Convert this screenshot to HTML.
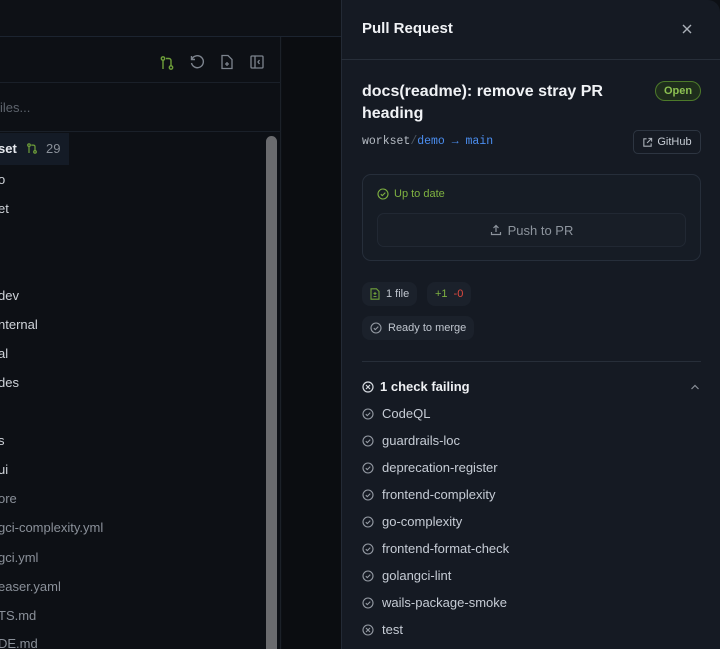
<!DOCTYPE html>
<html><head><style>
*{margin:0;padding:0;box-sizing:border-box}
html,body{width:720px;height:649px;overflow:hidden}
body{background:#0d1015;font-family:"Liberation Sans",sans-serif;position:relative;color:#d8dce2}
.abs{position:absolute}
.top{left:0;top:0;width:341px;height:37px;background:#0e1116;border-bottom:1px solid #1c2430}
.side{left:0;top:37px;width:281px;height:612px;background:#0d1015;border-right:1px solid #1c2129}
.dark{left:282px;top:37px;width:59px;height:612px;background:#0b0d11}
.hline{left:0;width:281px;height:1px;background:#1a2029}
.it{position:absolute;left:-2px;font-size:13px;color:#d0d4da;white-space:nowrap}
.it.g{color:#8a9099}
.panel{left:341px;top:0;width:379px;height:649px;background:#151a23;border-left:1px solid #232a35;border-top-right-radius:12px}
svg{display:block}
.chk{position:absolute;left:362px;font-size:13px;color:#c6ccd5;display:flex;align-items:center;gap:8px}
.pill{position:absolute;background:#1b212b;border-radius:8px;font-size:11px;color:#c0c6cf;display:flex;align-items:center;gap:6px;padding:0 8px;height:24px}
</style></head><body>
<div class="abs top"></div>
<div class="abs side">
</div>
<div class="abs hline" style="top:82px"></div>
<div class="abs hline" style="top:131px"></div>
<div class="abs dark"></div>
<svg class="abs" style="left:159px;top:55px" width="16" height="16" viewBox="0 0 16 16" fill="none" stroke="#6fa03a" stroke-width="1.4"><circle cx="4" cy="3.5" r="1.7"/><circle cx="12" cy="12.5" r="1.7"/><path d="M4 5.2V14M7 3.5h3a2 2 0 0 1 2 2v5.3"/></svg>
<svg class="abs" style="left:189px;top:54px" width="16" height="16" viewBox="0 0 16 16" fill="none" stroke="#7d848e" stroke-width="1.4"><path d="M3 5a6 6 0 1 1-.5 4"/><path d="M2.5 2v3.5H6"/></svg>
<svg class="abs" style="left:220px;top:54px" width="14" height="16" viewBox="0 0 14 16" fill="none" stroke="#7d848e" stroke-width="1.3"><path d="M2 1.5h6l4 4V14.5H2z"/><path d="M7 8v4M5 10h4"/></svg>
<svg class="abs" style="left:250px;top:55px" width="14" height="14" viewBox="0 0 14 14" fill="none" stroke="#7d848e" stroke-width="1.3"><rect x="1" y="1" width="12" height="12" rx="1"/><path d="M5 1v12M9.5 5L8 7l1.5 2"/></svg>
<div class="abs" style="left:0;top:100px;font-size:13px;color:#5d636c">iles...</div>
<div class="abs" style="left:0;top:133px;width:69px;height:32px;background:#141b26"></div>
<div class="it" style="top:141px;font-weight:bold;color:#e6e9ee">set</div>
<svg class="abs" style="left:26px;top:142px" width="12" height="13" viewBox="0 0 16 16" fill="none" stroke="#6fa03a" stroke-width="1.6"><circle cx="4" cy="3.5" r="1.7"/><circle cx="12" cy="12.5" r="1.7"/><path d="M4 5.2V14M7 3.5h3a2 2 0 0 1 2 2v5.3"/></svg>
<div class="abs" style="left:46px;top:141px;font-size:13px;color:#8a9099">29</div>
<div class="it" style="top:172px">o</div>
<div class="it" style="top:201px">et</div>
<div class="it" style="top:288px">dev</div>
<div class="it" style="top:317px">nternal</div>
<div class="it" style="top:346px">al</div>
<div class="it" style="top:375px">des</div>
<div class="it" style="top:433px">s</div>
<div class="it" style="top:462px">ui</div>
<div class="it g" style="top:491px">ore</div>
<div class="it g" style="top:520px">gci-complexity.yml</div>
<div class="it g" style="top:550px">gci.yml</div>
<div class="it g" style="top:579px">easer.yaml</div>
<div class="it g" style="top:608px">TS.md</div>
<div class="it g" style="top:636px">DE.md</div>
<div class="abs" style="left:266px;top:136px;width:11px;height:520px;background:#6a6b6e;border-radius:6px"></div>

<div class="abs panel"></div>
<div class="abs" style="left:341px;top:59px;width:379px;height:1px;background:#272e39"></div>
<div class="abs" style="left:362px;top:20px;font-size:15px;font-weight:bold;color:#f0f2f5">Pull Request</div>
<svg class="abs" style="left:681px;top:23px" width="12" height="12" viewBox="0 0 12 12" stroke="#aab0b8" stroke-width="1.4"><path d="M2 2l8 8M10 2l-8 8"/></svg>
<div class="abs" style="left:362px;top:81px;width:260px;font-size:16px;font-weight:bold;color:#f0f2f5;line-height:22px">docs(readme): remove stray PR heading</div>
<div class="abs" style="left:655px;top:81px;width:46px;height:20px;border:1px solid #4d7a2a;background:#1e2d1c;border-radius:10px;color:#8cc152;font-size:11px;font-weight:bold;text-align:center;line-height:18px">Open</div>
<div class="abs" style="left:362px;top:135px;font-family:'Liberation Mono',monospace;font-size:11.5px;color:#b6bcc4">workset<span style="color:#4c5560">/</span><span style="color:#4b8ef0">demo → main</span></div>
<div class="abs" style="left:633px;top:130px;width:68px;height:24px;border:1px solid #2d3541;border-radius:5px;font-size:11px;color:#c6ccd4;display:flex;align-items:center;justify-content:center;gap:4px"><svg width="11" height="11" viewBox="0 0 12 12" fill="none" stroke="#aab0b8" stroke-width="1.2"><path d="M5 2H2v8h8V7M7 1.5h3.5V5M10.5 1.5L5.5 6.5"/></svg>GitHub</div>
<div class="abs" style="left:362px;top:174px;width:339px;height:87px;border:1px solid #262e3a;border-radius:9px;background:#161c25"></div>
<div class="abs" style="left:377px;top:188px;font-size:11px;color:#7fb241;display:flex;align-items:center;gap:5px"><svg width="12" height="12" viewBox="0 0 12 12" fill="none" stroke="#7fb241" stroke-width="1.1"><circle cx="6" cy="6" r="5"/><path d="M3.8 6.2l1.5 1.4 3-3"/></svg>Up to date</div>
<div class="abs" style="left:377px;top:213px;width:309px;height:34px;border:1px solid #212833;border-radius:7px;background:#181e27;font-size:13px;color:#8d949d;display:flex;align-items:center;justify-content:center;gap:6px"><svg width="12" height="12" viewBox="0 0 12 12" fill="none" stroke="#8d949d" stroke-width="1.2"><path d="M1.5 8v2.5h9V8M6 8V1.5M3.5 4L6 1.5 8.5 4"/></svg>Push to PR</div>
<div class="pill" style="left:362px;top:282px"><svg width="10" height="12" viewBox="0 0 10 12" fill="none" stroke="#6fa03a" stroke-width="1.1"><path d="M1 .8h5.5L9 3.3V11.2H1z"/><path d="M5 4v3M3.5 5.5h3M3.5 8.5h3"/></svg>1 file</div>
<div class="pill" style="left:427px;top:282px"><span style="color:#7fb241">+1</span><span style="color:#e0493f">-0</span></div>
<div class="pill" style="left:362px;top:316px"><svg width="12" height="12" viewBox="0 0 12 12" fill="none" stroke="#959ba4" stroke-width="1.1"><circle cx="6" cy="6" r="5"/><path d="M3.8 6.2l1.5 1.4 3-3"/></svg>Ready to merge</div>
<div class="abs" style="left:362px;top:361px;width:339px;height:1px;background:#272e39"></div>
<div class="chk" style="top:379px;font-weight:bold;color:#eef0f3;gap:6px"><svg width="12" height="12" viewBox="0 0 12 12" fill="none" stroke="#d6dae0" stroke-width="1.2"><circle cx="6" cy="6" r="5"/><path d="M4 4l4 4M8 4l-4 4"/></svg>1 check failing</div>
<svg class="abs" style="left:690px;top:384px" width="10" height="6" viewBox="0 0 10 6" fill="none" stroke="#8a9099" stroke-width="1.2"><path d="M1.5 5L5 1.5 8.5 5"/></svg>
<div class="chk" style="top:406px"><svg width="12" height="12" viewBox="0 0 12 12" fill="none" stroke="#959ba4" stroke-width="1.1"><circle cx="6" cy="6" r="5"/><path d="M3.8 6.2l1.5 1.4 3-3"/></svg>CodeQL</div>
<div class="chk" style="top:433px"><svg width="12" height="12" viewBox="0 0 12 12" fill="none" stroke="#959ba4" stroke-width="1.1"><circle cx="6" cy="6" r="5"/><path d="M3.8 6.2l1.5 1.4 3-3"/></svg>guardrails-loc</div>
<div class="chk" style="top:460px"><svg width="12" height="12" viewBox="0 0 12 12" fill="none" stroke="#959ba4" stroke-width="1.1"><circle cx="6" cy="6" r="5"/><path d="M3.8 6.2l1.5 1.4 3-3"/></svg>deprecation-register</div>
<div class="chk" style="top:487px"><svg width="12" height="12" viewBox="0 0 12 12" fill="none" stroke="#959ba4" stroke-width="1.1"><circle cx="6" cy="6" r="5"/><path d="M3.8 6.2l1.5 1.4 3-3"/></svg>frontend-complexity</div>
<div class="chk" style="top:514px"><svg width="12" height="12" viewBox="0 0 12 12" fill="none" stroke="#959ba4" stroke-width="1.1"><circle cx="6" cy="6" r="5"/><path d="M3.8 6.2l1.5 1.4 3-3"/></svg>go-complexity</div>
<div class="chk" style="top:541px"><svg width="12" height="12" viewBox="0 0 12 12" fill="none" stroke="#959ba4" stroke-width="1.1"><circle cx="6" cy="6" r="5"/><path d="M3.8 6.2l1.5 1.4 3-3"/></svg>frontend-format-check</div>
<div class="chk" style="top:568px"><svg width="12" height="12" viewBox="0 0 12 12" fill="none" stroke="#959ba4" stroke-width="1.1"><circle cx="6" cy="6" r="5"/><path d="M3.8 6.2l1.5 1.4 3-3"/></svg>golangci-lint</div>
<div class="chk" style="top:595px"><svg width="12" height="12" viewBox="0 0 12 12" fill="none" stroke="#959ba4" stroke-width="1.1"><circle cx="6" cy="6" r="5"/><path d="M3.8 6.2l1.5 1.4 3-3"/></svg>wails-package-smoke</div>
<div class="chk" style="top:622px"><svg width="12" height="12" viewBox="0 0 12 12" fill="none" stroke="#959ba4" stroke-width="1.1"><circle cx="6" cy="6" r="5"/><path d="M4 4l4 4M8 4l-4 4"/></svg>test</div>
</body></html>
